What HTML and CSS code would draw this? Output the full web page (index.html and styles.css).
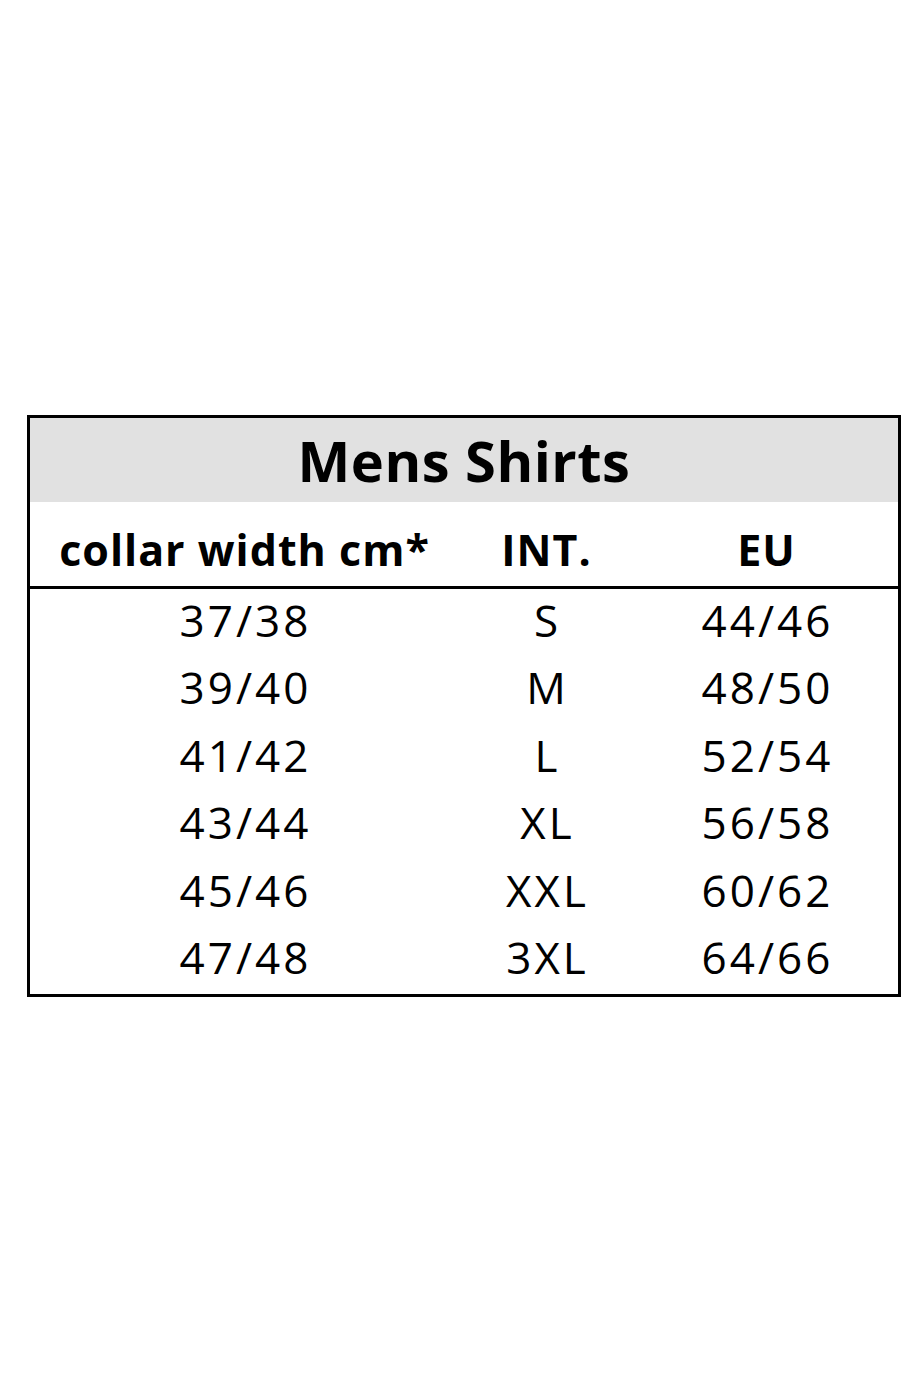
FILE: index.html
```html
<!DOCTYPE html>
<html lang="en">
<head>
<meta charset="utf-8">
<title>Mens Shirts</title>
<link rel="stylesheet" href="styles.css">
</head>
<body>
<div class="page">
  <div class="chart">
    <div class="title">Mens Shirts</div>
    <div class="row head">
      <div class="cell">collar width cm*</div>
      <div class="cell">INT.</div>
      <div class="cell">EU</div>
    </div>
    <div class="body">
      <div class="row"><div class="cell">37/38</div><div class="cell">S</div><div class="cell">44/46</div></div>
      <div class="row"><div class="cell">39/40</div><div class="cell">M</div><div class="cell">48/50</div></div>
      <div class="row"><div class="cell">41/42</div><div class="cell">L</div><div class="cell">52/54</div></div>
      <div class="row"><div class="cell">43/44</div><div class="cell">XL</div><div class="cell">56/58</div></div>
      <div class="row"><div class="cell">45/46</div><div class="cell">XXL</div><div class="cell">60/62</div></div>
      <div class="row"><div class="cell">47/48</div><div class="cell">3XL</div><div class="cell">64/66</div></div>
    </div>
  </div>
</div>
</body>
</html>
```

FILE: styles.css
```css
html, body {
  margin: 0;
  padding: 0;
  background: #ffffff;
}

.page {
  width: 923px;
  height: 1384px;
  box-sizing: border-box;
  padding: 415px 0 0 27px;
  font-family: "Open Sans", "Liberation Sans", sans-serif;
  color: #000;
}

.chart {
  width: 874px;
  box-sizing: border-box;
  border: 3px solid #000;
}

.title {
  height: 84px;
  background: #e1e1e1;
  display: flex;
  align-items: center;
  justify-content: center;
  font-weight: 700;
  font-size: 56px;
  letter-spacing: 0.5px;
  line-height: 1;
}

.row {
  display: grid;
  grid-template-columns: 428px 176px 1fr;
}

.cell {
  display: flex;
  align-items: center;
  justify-content: center;
  white-space: nowrap;
}

.head {
  height: 84px;
  border-bottom: 3px solid #000;
  font-weight: 700;
  font-size: 43px;
  letter-spacing: 1px;
}

.head .cell {
  padding-top: 10px;
  padding-left: 1px;
}

.body .row {
  height: 67.5px;
  font-size: 44px;
  letter-spacing: 3px;
}

.body .cell {
  padding-bottom: 6px;
  padding-left: 3px;
}
```
